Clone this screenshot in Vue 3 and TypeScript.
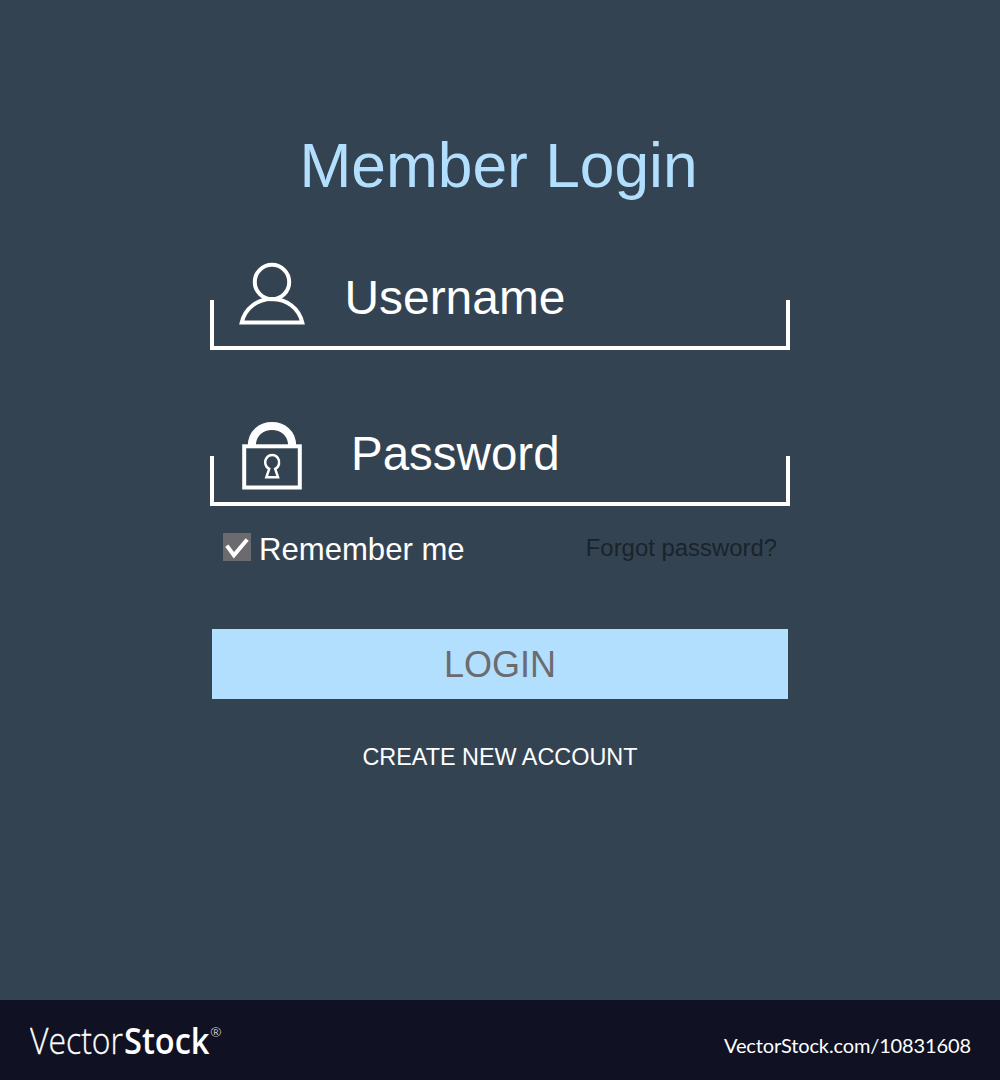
<script setup lang="ts">
import { ref } from 'vue'

const remember = ref<boolean>(true)
</script>

<template>
  <div class="page">
    <main class="panel">
      <h1 class="title">Member Login</h1>

      <div class="field">
        <svg class="icon" width="70" height="90" viewBox="0 0 70 90" fill="none" stroke="#fff" stroke-width="4">
          <circle cx="35" cy="20" r="17.200" />
          <path d="M4.700 60.500C8 46.500 20 37 35 37S62 46.500 65.300 60.500Z" />
        </svg>
        <span class="label username">Username</span>
      </div>

      <div class="field second">
        <svg class="icon" width="70" height="90" viewBox="0 0 70 90" fill="none" stroke="#fff" stroke-width="4">
          <path d="M14.800 28C14.800 1.400 55.200 1.400 55.200 28" stroke-width="8" />
          <rect x="7.200" y="28.300" width="55.600" height="41.200" />
          <path d="M32.200 50.800A7 7.200 0 1 1 38.200 50.800L41 59.200H29.400Z" stroke-width="2.500" />
        </svg>
        <span class="label password">Password</span>
      </div>

      <div class="options">
        <div class="remember" @click="remember = !remember">
          <span class="box">
            <svg v-if="remember" width="28" height="28" viewBox="0 0 28 28" fill="none" stroke="#fff" stroke-width="4">
              <path d="M3.800 12.600L10.900 22.200L24.200 6.500" />
            </svg>
          </span>
          <span class="remember-text">Remember me</span>
        </div>
        <a class="forgot">Forgot password?</a>
      </div>

      <button class="login" type="button">LOGIN</button>
      <a class="create">CREATE NEW ACCOUNT</a>
    </main>

    <footer class="footer">
      <svg class="brand" width="200" height="80" viewBox="0 0 200 80" fill="#fff">
        <text x="0" y="53.500" class="light" textLength="93" lengthAdjust="spacingAndGlyphs">Vector</text>
        <text x="94" y="53.500" class="bold" textLength="85.500" lengthAdjust="spacingAndGlyphs">Stock</text>
        <text x="180.300" y="36.500" class="reg">®</text>
      </svg>
      <svg class="link" width="250" height="80" viewBox="0 0 250 80" fill="#fff">
        <text x="2" y="53" textLength="247">VectorStock.com/10831608</text>
      </svg>
    </footer>
  </div>
</template>

<style>
body {
  margin: 0;
}
</style>

<style scoped>
.page {
  width: 1000px;
  height: 1080px;
  display: flex;
  flex-direction: column;
  background: #344352;
  font-family: "Liberation Sans", Arial, sans-serif;
  color: #fff;
}
.panel {
  width: 580px;
  height: 1000px;
  margin: 0 auto;
  display: flex;
  flex-direction: column;
  align-items: center;
}
.title {
  margin: 125px 0 57px;
  padding-right: 3px;
  height: 80px;
  line-height: 82px;
  font-size: 62.3px;
  font-weight: 400;
  color: #b3dfff;
  white-space: nowrap;
}
.field {
  position: relative;
  width: 580px;
  height: 88px;
  display: flex;
  align-items: flex-start;
}
.field::after {
  content: "";
  position: absolute;
  inset: 38px 0 0;
  border: 4px solid #fff;
  border-top: 0;
}
.second {
  margin-top: 68px;
}
.icon {
  flex: none;
  margin-left: 27px;
}
.label {
  line-height: 72px;
}
.username {
  margin-left: 37.5px;
  font-size: 47.9px;
}
.password {
  margin-left: 44px;
  font-size: 47.5px;
}
.options {
  width: 554px;
  height: 34px;
  margin-top: 26px;
  display: flex;
  justify-content: space-between;
}
.remember {
  display: flex;
  font-size: 31.1px;
}
.remember-text {
  line-height: 36px;
}
.box {
  width: 28px;
  height: 28px;
  margin: 1px 8px 0 0;
  background: #6b6b6f;
}
.box svg {
  display: block;
}
.forgot {
  font-size: 23.9px;
  line-height: 31px;
  color: #19232b;
}
.login {
  width: 576px;
  height: 70px;
  margin-top: 63px;
  padding: 2px 0 0;
  border: 0;
  background: #b3dfff;
  color: #6b6b70;
  font-family: inherit;
  font-size: 36px;
  line-height: 68px;
}
.create {
  margin-top: 43px;
  font-size: 23.4px;
  line-height: 30px;
}
.footer {
  height: 80px;
  padding: 0 28px 0 30px;
  display: flex;
  justify-content: space-between;
  background: #101122;
}
.light {
  font: 300 36px "Open Sans", sans-serif;
  stroke: #fff;
  stroke-width: 0.3px;
}
.bold {
  font: 600 36px "Open Sans", sans-serif;
}
.reg {
  font: 300 13.5px "Open Sans", sans-serif;
}
.link {
  font: 400 20px Lato, sans-serif;
}
</style>
